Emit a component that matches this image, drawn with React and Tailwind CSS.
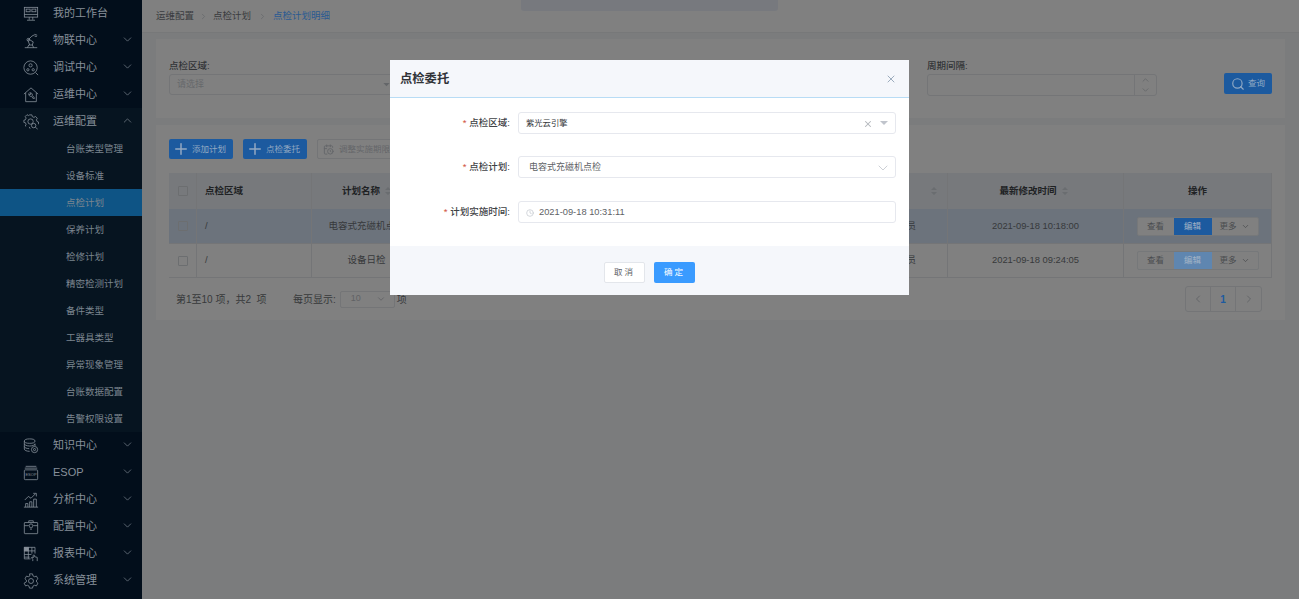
import React from 'react'
import { ChevronDown, ChevronUp, ChevronLeft, ChevronRight, Plus, Search, X, Clock, CalendarClock } from 'lucide-react'

const FONT = { fontFamily: '"Liberation Sans", "Noto Sans CJK SC", sans-serif' }

const S = { width: 16, height: 16, viewBox: '0 0 18 18', fill: 'none', stroke: 'currentColor', strokeWidth: 0.9 }

const icons = {
  desk: (
    <svg {...S}>
      <rect x="1.5" y="1.5" width="15" height="11" />
      <rect x="3.5" y="3.5" width="4.5" height="3" />
      <rect x="10" y="3.5" width="4.5" height="3" />
      <path d="M1.5 9.5h15M7 12.5v3M11 12.5v3M4.5 16h9" />
    </svg>
  ),
  robot: (
    <svg {...S}>
      <path d="M2 16.5h14M5 16.5l1.5-3h4l1.5 3M7.5 13.5L5.5 8l1-1 5 3-1 3.5M6.5 7L10 3.5l3-1.5M13 1.5l3 1M13 3.5l2.5.5" />
      <circle cx="6" cy="7.5" r="1.5" />
    </svg>
  ),
  debug: (
    <svg {...S}>
      <circle cx="8.5" cy="8.5" r="7.5" />
      <circle cx="8.5" cy="6" r="1.8" />
      <circle cx="5.5" cy="11" r="1.3" />
      <circle cx="11.5" cy="11" r="1.3" />
      <path d="M14 14l3 3" />
    </svg>
  ),
  house: (
    <svg {...S}>
      <path d="M1 8l8-7 8 7M3 6.5V16.5h12V6.5" />
      <path d="M6.5 7.5a2.5 2.5 0 0 0 3 3l2.5 3 1-1-2.5-3a2.5 2.5 0 0 0-3-3l1.5 1.5-1 1z" />
    </svg>
  ),
  gearSearch: (
    <svg {...S}>
      <path d="M7 1h3l.5 2 1.800.8 1.800-1 2 2-1 1.800.8 1.900 1.600.5v2.500M3 14l-.5-.5 1-1.800-.8-1.900L1 9.500V7l1.700-.5.800-1.900-1-1.800 2-2 1.800 1L7 1.500M8 16.500l-1-2" />
      <circle cx="8.5" cy="8.5" r="3" />
      <circle cx="12" cy="13" r="2.5" />
      <path d="M14 15l2.500 2" />
    </svg>
  ),
  data: (
    <svg {...S}>
      <ellipse cx="7.5" cy="3.5" rx="6" ry="2.5" />
      <path d="M1.500 3.500v9c0 1.300 2.500 2.500 6 2.500M1.500 6.500c0 1.300 2.500 2.500 6 2.500s6-1.200 6-2.500V9M1.500 9.500c0 1.300 2.500 2.500 5.500 2.500" />
      <circle cx="13" cy="13" r="3.5" />
      <circle cx="13" cy="13" r="1.2" />
    </svg>
  ),
  esop: (
    <svg {...S}>
      <path d="M3 1.500h12M2 3.500h14" />
      <rect x="1.5" y="5.5" width="15" height="11" rx="1" />
      <text x="9" y="12.8" textAnchor="middle" fontSize="4.5" fill="currentColor" stroke="none">ESOP</text>
    </svg>
  ),
  chart: (
    <svg {...S}>
      <path d="M1 17h16M3 17v-4h2.500v4M7.500 17v-6H10v6M12 17V8h3v9M2 9l4-4 3 2 5-5M11.500 1.500H15V5" />
    </svg>
  ),
  box: (
    <svg {...S}>
      <rect x="1.5" y="4" width="15" height="12.5" rx="0.5" />
      <path d="M1.500 7.500h5M11.500 7.500h5M6.500 4V2h5v2" />
      <path d="M7 7.500a2 2 0 1 1 4 0c0 1-1 1.500-1 2.500H8c0-1-1-1.500-1-2.500zM8 11.500h2" />
    </svg>
  ),
  report: (
    <svg {...S}>
      <path d="M1.500 1.500h12v7M1.500 1.500v13h7M1.500 5.500h12M1.500 9.500h8M1.500 12.500h6M6 1.500v13M10 1.500v7" />
      <path d="M11 17v-2l-1.500-2 1-.5 1 1V10.500a.8.8 0 0 1 1.500 0V12l3 .8V17" />
      <rect x="1.5" y="1.5" width="4.5" height="4" fill="currentColor" />
    </svg>
  ),
  gear: (
    <svg {...S}>
      <path d="M7.300 1h3.400l.5 2.200 1.800 1 2.100-.7 1.700 3-1.600 1.500v2l1.600 1.500-1.700 3-2.100-.7-1.800 1-.5 2.200H7.300l-.5-2.200-1.800-1-2.100.7-1.700-3L3.800 10V8L2.200 6.500l1.700-3 2.100.7 1.800-1z" />
      <circle cx="9" cy="9" r="2.8" />
    </svg>
  ),
}

const MENU_TOP = [
  { icon: 'desk', label: '我的工作台' },
  { icon: 'robot', label: '物联中心', arrow: true },
  { icon: 'debug', label: '调试中心', arrow: true },
  { icon: 'house', label: '运维中心', arrow: true },
]
const SUB = ['台账类型管理', '设备标准', '点检计划', '保养计划', '检修计划', '精密检测计划', '备件类型', '工器具类型', '异常现象管理', '台账数据配置', '告警权限设置']
const MENU_BOTTOM = [
  { icon: 'data', label: '知识中心', arrow: true },
  { icon: 'esop', label: 'ESOP', arrow: true },
  { icon: 'chart', label: '分析中心', arrow: true },
  { icon: 'box', label: '配置中心', arrow: true },
  { icon: 'report', label: '报表中心', arrow: true },
  { icon: 'gear', label: '系统管理', arrow: true },
]

function MenuRow({ item, open }) {
  return (
    <div className="flex h-[27px] items-center text-[#87909a]">
      <span className="ml-[23px] flex w-[30px] shrink-0">{icons[item.icon]}</span>
      <span className="text-[11px] leading-none">{item.label}</span>
      {open && <ChevronUp size={13} className="-mt-[3px] ml-auto mr-[8px]" strokeWidth={1.2} />}
      {item.arrow && <ChevronDown size={13} className="-mt-[3px] ml-auto mr-[8px]" strokeWidth={1.2} />}
    </div>
  )
}

function Sidebar() {
  return (
    <aside className="relative z-20 h-[599px] w-[142px] shrink-0 overflow-hidden bg-[#020e1b]">
      {MENU_TOP.map((m) => <MenuRow key={m.label} item={m} />)}
      <div className="bg-[#061420]">
        <MenuRow item={{ icon: 'gearSearch', label: '运维配置' }} open />
        {SUB.map((s) => (
          <div
            key={s}
            className={`flex h-[27px] items-center pl-[66px] text-[9.5px] leading-none text-[#7b858f] ${s === '点检计划' ? 'bg-[#0e5485]' : ''}`}
          >
            {s}
          </div>
        ))}
      </div>
      {MENU_BOTTOM.map((m) => <MenuRow key={m.label} item={m} />)}
    </aside>
  )
}

function Sort() {
  return (
    <svg width="6" height="8" viewBox="0 0 6 8" className="ml-[5px] text-[#6a6d70]" fill="currentColor">
      <path d="M3 0l3 3H0zM3 8L0 5h6z" />
    </svg>
  )
}

const ROWS = [
  { name: '电容式充磁机点检', time: '2021-09-18 10:18:00', selected: true },
  { name: '设备日检', time: '2021-09-18 09:24:05' },
]
const COLS = 'grid grid-cols-[28px_115px_110px_1fr_98px_176px_147px]'
const CELL = 'flex items-center border-r border-[#747577]'

function Box() {
  return <span className="block h-[10px] w-[10px] rounded-[1px] border border-[#6c6e70]" />
}

function Table() {
  return (
    <div className="mt-[14px] border-b border-r border-[#747577] text-[9.5px] text-[#37393b]">
      <div className={`${COLS} h-[36px] bg-[#77797c] font-bold text-[#202224]`}>
        <div className={`${CELL} justify-center`}><Box /></div>
        <div className={`${CELL} pl-[8px]`}>点检区域</div>
        <div className={`${CELL} justify-center`}>计划名称<Sort /></div>
        <div className={CELL} />
        <div className={`${CELL} justify-end pr-[10px]`}><Sort /></div>
        <div className={`${CELL} justify-center pr-[4px]`}>最新修改时间<Sort /></div>
        <div className="flex items-center justify-center">操作</div>
      </div>
      {ROWS.map((r, i) => (
        <div key={r.name} className={`${COLS} h-[34px] ${r.selected ? 'bg-[#6c737c]' : 'border-t border-[#747577]'}`}>
          <div className={`${CELL} justify-center`}><Box /></div>
          <div className={`${CELL} pl-[8px]`}>/</div>
          <div className={`${CELL} justify-center`}>{r.name}</div>
          <div className={CELL} />
          <div className={`${CELL} justify-end pr-[31px]`}>管理员</div>
          <div className={`${CELL} justify-center text-[9.4px]`}>{r.time}</div>
          <div className="flex items-center justify-center">
            <div className="flex h-[19px] w-[122px] overflow-hidden rounded-[2px] border border-[#76787a] bg-[#808080] text-[8.5px] text-[#4a4c4f]">
              <span className="flex w-[36px] items-center justify-center">查看</span>
              <span className={`flex w-[38px] items-center justify-center text-[#a4b4c6] ${i === 0 ? 'bg-[#1c5a9f]' : 'bg-[#5f86b0]'}`}>编辑</span>
              <span className="flex flex-1 items-center justify-center">更多<ChevronDown size={9} className="ml-1" /></span>
            </div>
          </div>
        </div>
      ))}
    </div>
  )
}

function Field({ label, children }) {
  return (
    <div className="flex h-[22px] items-center">
      <div className="w-[128px] pr-[8px] pt-[1px] text-right text-[9.5px] font-medium text-[#3e4145]">
        <span className="mr-[3px] text-[#d0503c]">*</span>{label}
      </div>
      <div className="flex h-[22px] w-[378px] items-center rounded-[3px] border border-[#e6e8ee] bg-white px-[7px] pt-[1px]">
        {children}
      </div>
    </div>
  )
}

function Modal() {
  return (
    <div className="h-[235px] w-[519px] overflow-hidden bg-white text-[#4a4c50]">
      <div className="flex h-[38px] items-center justify-between border-b border-[#b8dcf5] bg-[#f5f7fb] px-[10px] pt-[1px]">
        <span className="text-[12.3px] font-bold text-[#303338]">点检委托</span>
        <X size={12} className="mr-[2px] text-[#7d93a8]" strokeWidth={1.5} />
      </div>
      <div className="flex h-[148px] flex-col pt-[14px]">
        <Field label="点检区域:">
          <span className="text-[8.3px] text-[#33363a]">紫光云引擎</span>
          <X size={10} className="ml-auto text-[#b5b8bd]" strokeWidth={2.5} />
          <svg width="8" height="5" viewBox="0 0 8 5" className="ml-[7px]"><path d="M0 0h8L4 4z" fill="#c0c4cc" /></svg>
        </Field>
        <div className="h-[22px] shrink-0" />
        <Field label="点检计划:">
          <span className="pl-[3px] text-[9px] text-[#606266]">电容式充磁机点检</span>
          <ChevronDown size={16} className="-mr-[3px] ml-auto text-[#c0c4cc]" strokeWidth={1.2} />
        </Field>
        <div className="h-[23px] shrink-0" />
        <Field label="计划实施时间:">
          <Clock size={8} className="text-[#c0c4cc]" />
          <span className="ml-[5px] text-[9.3px] text-[#606266]">2021-09-18 10:31:11</span>
        </Field>
      </div>
      <div className="flex h-[49px] items-center justify-center gap-[9px] bg-[#f5f7fb] pt-[3px] text-[8.5px]">
        <span className="flex h-[21px] w-[41px] items-center justify-center rounded-[2px] border border-[#e3e6eb] bg-white tracking-[2px] text-[#606266]">取消</span>
        <span className="flex h-[21px] w-[41px] items-center justify-center rounded-[2px] bg-[#3a9bff] tracking-[2px] text-white">确定</span>
      </div>
    </div>
  )
}

export default function App() {
  return (
    <div className="relative flex h-[599px] w-[1299px] overflow-hidden bg-[#7b7c7d]" style={FONT}>
      <Sidebar />
      <main className="relative flex min-w-0 flex-1 flex-col">
        <div className="flex h-[33px] items-center border-b border-[#777879] bg-[#808080] pl-[14px] text-[9.5px] text-[#3a3c3f]">
          <span>运维配置</span>
          <ChevronRight size={9} className="mx-[5px] text-[#66686b]" />
          <span>点检计划</span>
          <ChevronRight size={9} className="mx-[6.5px] text-[#66686b]" />
          <span className="text-[#2a5a92]">点检计划明细</span>
        </div>

        <section className="mx-[14px] mt-[6px] flex h-[79px] bg-[#808080] pl-[13px] pt-[20px]">
          <div className="w-[224px]">
            <div className="text-[9.5px] font-medium leading-[13px] text-[#323437]">点检区域:</div>
            <div className="mt-[2px] flex h-[21px] items-center rounded-[3px] border border-[#747577] pl-[7px] text-[9px] text-[#66686b]">
              请选择
              <svg width="7" height="4" viewBox="0 0 8 5" className="ml-auto mr-[2px]"><path d="M0 0h8L4 4z" fill="#646669" /></svg>
            </div>
          </div>
          <div className="ml-[534px] w-[230px]">
            <div className="text-[9.5px] font-medium leading-[13px] text-[#323437]">周期间隔:</div>
            <div className="mt-[2px] flex h-[22px] rounded-[3px] border border-[#747577]">
              <div className="ml-auto flex w-[22px] flex-col items-center justify-around border-l border-[#747577] text-[#646669]">
                <ChevronUp size={11} />
                <ChevronDown size={11} />
              </div>
            </div>
          </div>
          <button className="ml-[67px] mt-[14px] flex h-[21px] w-[48px] items-center justify-center rounded-[2px] bg-[#1c5a9f] text-[8.5px] text-[#8fa8c4]">
            <Search size={14} className="mr-[3px]" />查询
          </button>
        </section>

        <section className="mx-[14px] mt-[7px] h-[195px] bg-[#808080] px-[13px] pt-[14px]">
          <div className="flex h-[20px] items-center gap-[10px] text-[8.5px] text-[#93a9c2]">
            <button className="flex h-[20px] w-[64px] items-center rounded-[2px] bg-[#1c5a9f] pl-[3px]"><Plus size={18} className="mr-[2px]" />添加计划</button>
            <button className="flex h-[20px] w-[64px] items-center rounded-[2px] bg-[#1c5a9f] pl-[3px]"><Plus size={18} className="mr-[2px]" />点检委托</button>
            <button className="flex h-[20px] w-[85px] items-center rounded-[2px] border border-[#747577] pl-[5px] text-[#646669]"><CalendarClock size={11} className="mr-[5px]" />调整实施期限</button>
          </div>
          <Table />
          <div className="mt-[8px] flex h-[26px] items-center text-[10px] text-[#37393b]">
            <span className="ml-[7px] w-[117px]">第1至10 项，共2&nbsp; 项</span>
            <span>每页显示:</span>
            <div className="ml-[4px] flex h-[17px] w-[55px] items-center justify-between rounded-[2px] border border-[#747577] pl-[10px] pr-[8px] text-[9px] text-[#606265]">10<ChevronDown size={10} /></div>
            <span className="ml-[2px]">项</span>
            <div className="ml-auto mr-[10px] flex h-[26px] rounded-[3px] border border-[#747577] text-[#646669]">
              <span className="flex w-[25px] items-center justify-center border-r border-[#747577]"><ChevronLeft size={12} /></span>
              <span className="flex w-[25px] items-center justify-center border-r border-[#747577] font-bold text-[#1c5a9f]">1</span>
              <span className="flex w-[25px] items-center justify-center"><ChevronRight size={12} /></span>
            </div>
          </div>
        </section>

        <div className="absolute left-[379px] top-0 h-[11px] w-[257px] rounded-b-[3px] bg-[#77797e]" />
      </main>
      <div className="fixed inset-0 z-10 flex justify-center pt-[60px]">
        <div className="h-[235px]"><Modal /></div>
      </div>
    </div>
  )
}
